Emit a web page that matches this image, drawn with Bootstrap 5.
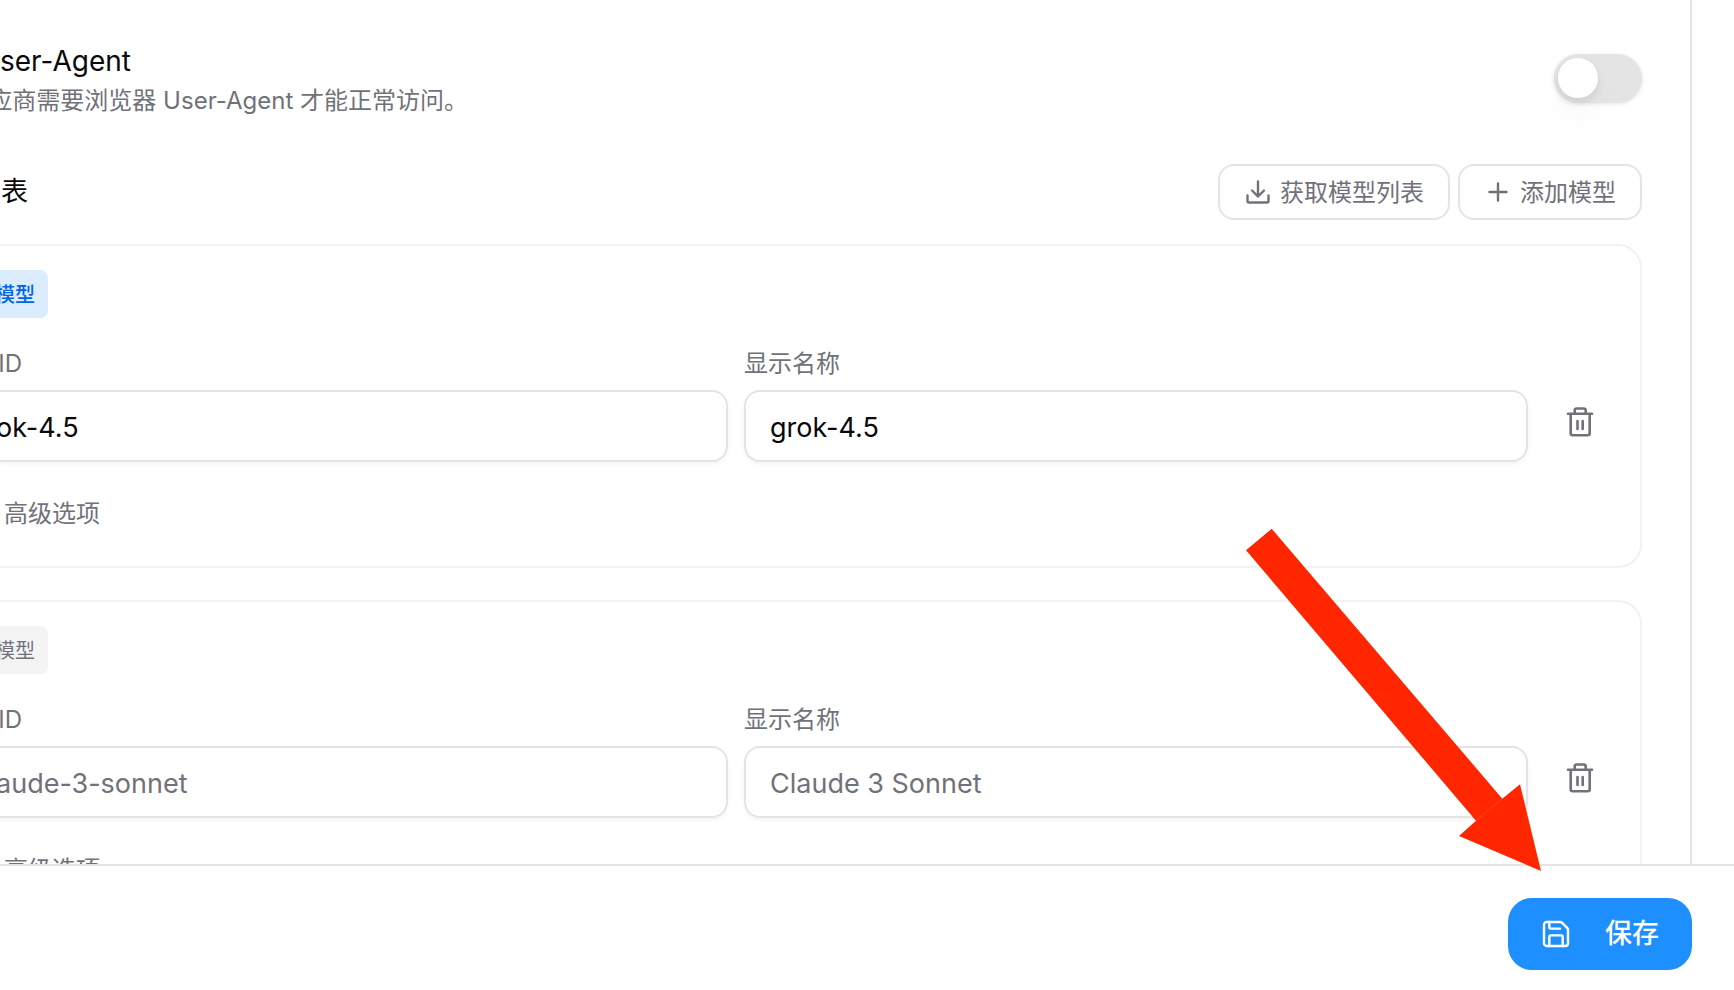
<!DOCTYPE html>
<html lang="zh-CN">
<head>
<meta charset="utf-8">
<meta name="viewport" content="width=device-width, initial-scale=1">
<title>模型设置</title>
<link href="https://cdn.jsdelivr.net/npm/bootstrap@5.3.0/dist/css/bootstrap.min.css" rel="stylesheet">
<style>
  :root { --ink: #09090b; --muted: #71717a; --line: #e4e4e5; --soft: #f2f2f3; --action: #1e8fff; }
  body { font-family: Inter, "Noto Sans CJK SC", sans-serif; color: var(--ink); font-size: 27px; line-height: 40px; background: #fff; }
  .settings-pane { min-height: 0; margin-right: 42px; border-right: 2px solid var(--line); padding: 41px 48px 0 0; }
  .bleed-text { white-space: nowrap; display: flex; justify-content: flex-end; }
  .agent-title { font-size: 28px; }
  .hint { font-size: 24px; line-height: 40px; color: var(--muted); }
  .agent-copy { width: 468px; }
  .list-head { margin-top: 43px; }
  .list-title { width: 28px; font-size: 27px; line-height: 40px; font-weight: 400; }
  .toggle { width: 88px !important; height: 49px; margin: 13px 0 0 !important; float: none !important; display: block; border: 0; background-color: var(--line); background-image: none !important; border-radius: 25px !important; position: relative; box-shadow: 0 1px 4px rgba(0,0,0,.1); appearance: none; }
  .toggle::before { content: ""; position: absolute; left: 4px; top: 4px; width: 40px; height: 40px; border-radius: 50%; background: #fff; box-shadow: 0 18px 30px -4px rgba(0,0,0,.05), 0 4px 12px -2px rgba(0,0,0,.1); }
  .toggle:checked { background-color: var(--action); }
  .toggle:checked::before { left: 44px; }
  .tool-btn { height: 56px; border: 2px solid var(--line); border-radius: 16px; color: var(--muted); font-size: 24px; line-height: 32px; font-weight: 400; padding: 2px 24px 0; background: #fff; }
  .model-card { border: 2px solid var(--soft); border-left: 0; border-radius: 0 24px 24px 0; padding: 24px 24px 36px 0; }
  .model-card + .model-card { margin-top: 32px; }
  .tag { width: 48px; height: 48px; border-radius: 0 8px 8px 0; background: #f4f4f5; color: var(--muted); font-size: 20px; line-height: 50px; padding-right: 13px; overflow: hidden; }
  .tag-main { background: #dbecff; color: #0064e6; font-weight: 500; }
  .field-row { margin-top: 30px; }
  .field-label { font-size: 24px; line-height: 32px; color: var(--muted); margin-bottom: 10px; }
  .id-label { width: 22px; overflow: hidden; }
  .model-input { height: 72px; border: 2px solid var(--line); border-radius: 16px; padding: 2px 24px 0; font-size: 27px; color: var(--ink); box-shadow: 0 2px 4px rgba(0,0,0,.05); }
  .model-input::placeholder { color: var(--muted); opacity: 1; }
  .id-input { border-left: 0; border-radius: 0 16px 16px 0; padding-left: 0; text-indent: -4px; }
  .id-field { flex: 728 1 0; min-width: 0; }
  .name-field { flex: 784 1 0; min-width: 0; }
  .icon-btn { width: 72px; height: 80px; color: var(--muted); padding: 0; border: 0; line-height: 1; }
  .advanced { border: 0; background: none; color: var(--muted); font-size: 24px; line-height: 32px; padding: 0 0 0 4px; margin-top: 36px; }
  .action-bar { border-top: 2px solid var(--line); padding: 32px 42px 20px; background: #fff; }
  .save-btn { height: 72px; border: 0; border-radius: 24px; background: var(--action); color: #fff; font-size: 27px; line-height: 40px; font-weight: 500; padding: 0 33px 0 32px; gap: 33px; }
  .pointer-arrow { position: absolute; right: 193px; bottom: 119px; pointer-events: none; }
</style>
</head>
<body class="vh-100 d-flex flex-column overflow-hidden position-relative">
<svg class="d-none">
  <symbol id="trash" viewBox="0 0 28 32"><path d="M2 7.7h24M4.7 7.7v19.6a2 2 0 0 0 2 2h15a2 2 0 0 0 2-2V7.7M8.7 7.7V4.5a2 2 0 0 1 2-2h7a2 2 0 0 1 2 2v3.2M11.5 15v8M16.7 15v8" fill="none" stroke="currentColor" stroke-width="2.6" stroke-linecap="round" stroke-linejoin="round"/></symbol>
</svg>
<main class="settings-pane flex-grow-1 overflow-hidden">
  <div class="d-flex justify-content-between align-items-start">
    <div>
      <label class="d-block agent-title" for="ua">ser-Agent</label>
      <div class="agent-copy bleed-text hint">应商需要浏览器 User-Agent 才能正常访问。</div>
    </div>
    <div class="form-check form-switch p-0 m-0"><input class="form-check-input toggle" type="checkbox" role="switch" id="ua"></div>
  </div>

  <div class="list-head d-flex justify-content-between align-items-center">
    <h2 class="list-title bleed-text m-0">表</h2>
    <div class="d-flex gap-2">
      <button type="button" class="btn tool-btn d-flex align-items-center gap-2">
        <svg width="28" height="28" viewBox="0 0 28 28" fill="none" stroke="currentColor" stroke-width="2.4" stroke-linecap="round" stroke-linejoin="round"><path d="M14 2.5v15M8 11.5l6 6 6-6M3.5 16.5V22A1.5 1.5 0 0 0 5 23.5h18a1.5 1.5 0 0 0 1.5-1.5v-5.5"/></svg>获取模型列表</button>
      <button type="button" class="btn tool-btn d-flex align-items-center gap-2">
        <svg width="28" height="28" viewBox="0 0 28 28" fill="none" stroke="currentColor" stroke-width="2.4" stroke-linecap="round"><path d="M5.500 13h17M14 4.500v17"/></svg>添加模型</button>
    </div>
  </div>

  <section class="model-card mt-4">
    <div class="tag tag-main bleed-text">模型</div>
    <div class="field-row d-flex align-items-end gap-3">
      <div class="id-field"><label class="field-label id-label bleed-text" for="id1">ID</label><input id="id1" class="form-control model-input id-input" value="ok-4.5"></div>
      <div class="name-field"><label class="field-label d-block" for="name1">显示名称</label><input id="name1" class="form-control model-input" value="grok-4.5"></div>
      <button type="button" class="btn icon-btn" aria-label="删除模型"><svg width="28" height="32"><use href="#trash"/></svg></button>
    </div>
    <button type="button" class="advanced d-block">高级选项</button>
  </section>

  <section class="model-card">
    <div class="tag bleed-text">模型</div>
    <div class="field-row d-flex align-items-end gap-3">
      <div class="id-field"><label class="field-label id-label bleed-text" for="id2">ID</label><input id="id2" class="form-control model-input id-input" placeholder="aude-3-sonnet"></div>
      <div class="name-field"><label class="field-label d-block" for="name2">显示名称</label><input id="name2" class="form-control model-input" placeholder="Claude 3 Sonnet"></div>
      <button type="button" class="btn icon-btn" aria-label="删除模型"><svg width="28" height="32"><use href="#trash"/></svg></button>
    </div>
    <button type="button" class="advanced d-block">高级选项</button>
  </section>
</main>
<footer class="action-bar d-flex justify-content-end">
  <button type="button" class="btn save-btn d-flex align-items-center">
    <svg width="32" height="32" viewBox="0 0 24 24" fill="none" stroke="currentColor" stroke-width="1.8" stroke-linecap="round" stroke-linejoin="round"><path d="M15.2 3a2 2 0 0 1 1.4.6l3.8 3.8a2 2 0 0 1 .6 1.4V19a2 2 0 0 1-2 2H5a2 2 0 0 1-2-2V5a2 2 0 0 1 2-2z"/><path d="M17 21v-7a1 1 0 0 0-1-1H8a1 1 0 0 0-1 1v7M7 3v4a1 1 0 0 0 1 1h7"/></svg>保存</button>
</footer>
<svg class="pointer-arrow" width="295" height="343" viewBox="0 0 295 343" aria-hidden="true">
  <path fill="#ff2600" d="M25.7 .7 256.3 270.7 274 256.3 295 343 213 308 230 292.7 0 22.3z"/>
  <path stroke="#fff" stroke-opacity=".2" stroke-width=".7" d="M230 292.7 256.3 270.7"/>
</svg>
<script src="https://cdn.jsdelivr.net/npm/bootstrap@5.3.0/dist/js/bootstrap.bundle.min.js"></script>
</body>
</html>
